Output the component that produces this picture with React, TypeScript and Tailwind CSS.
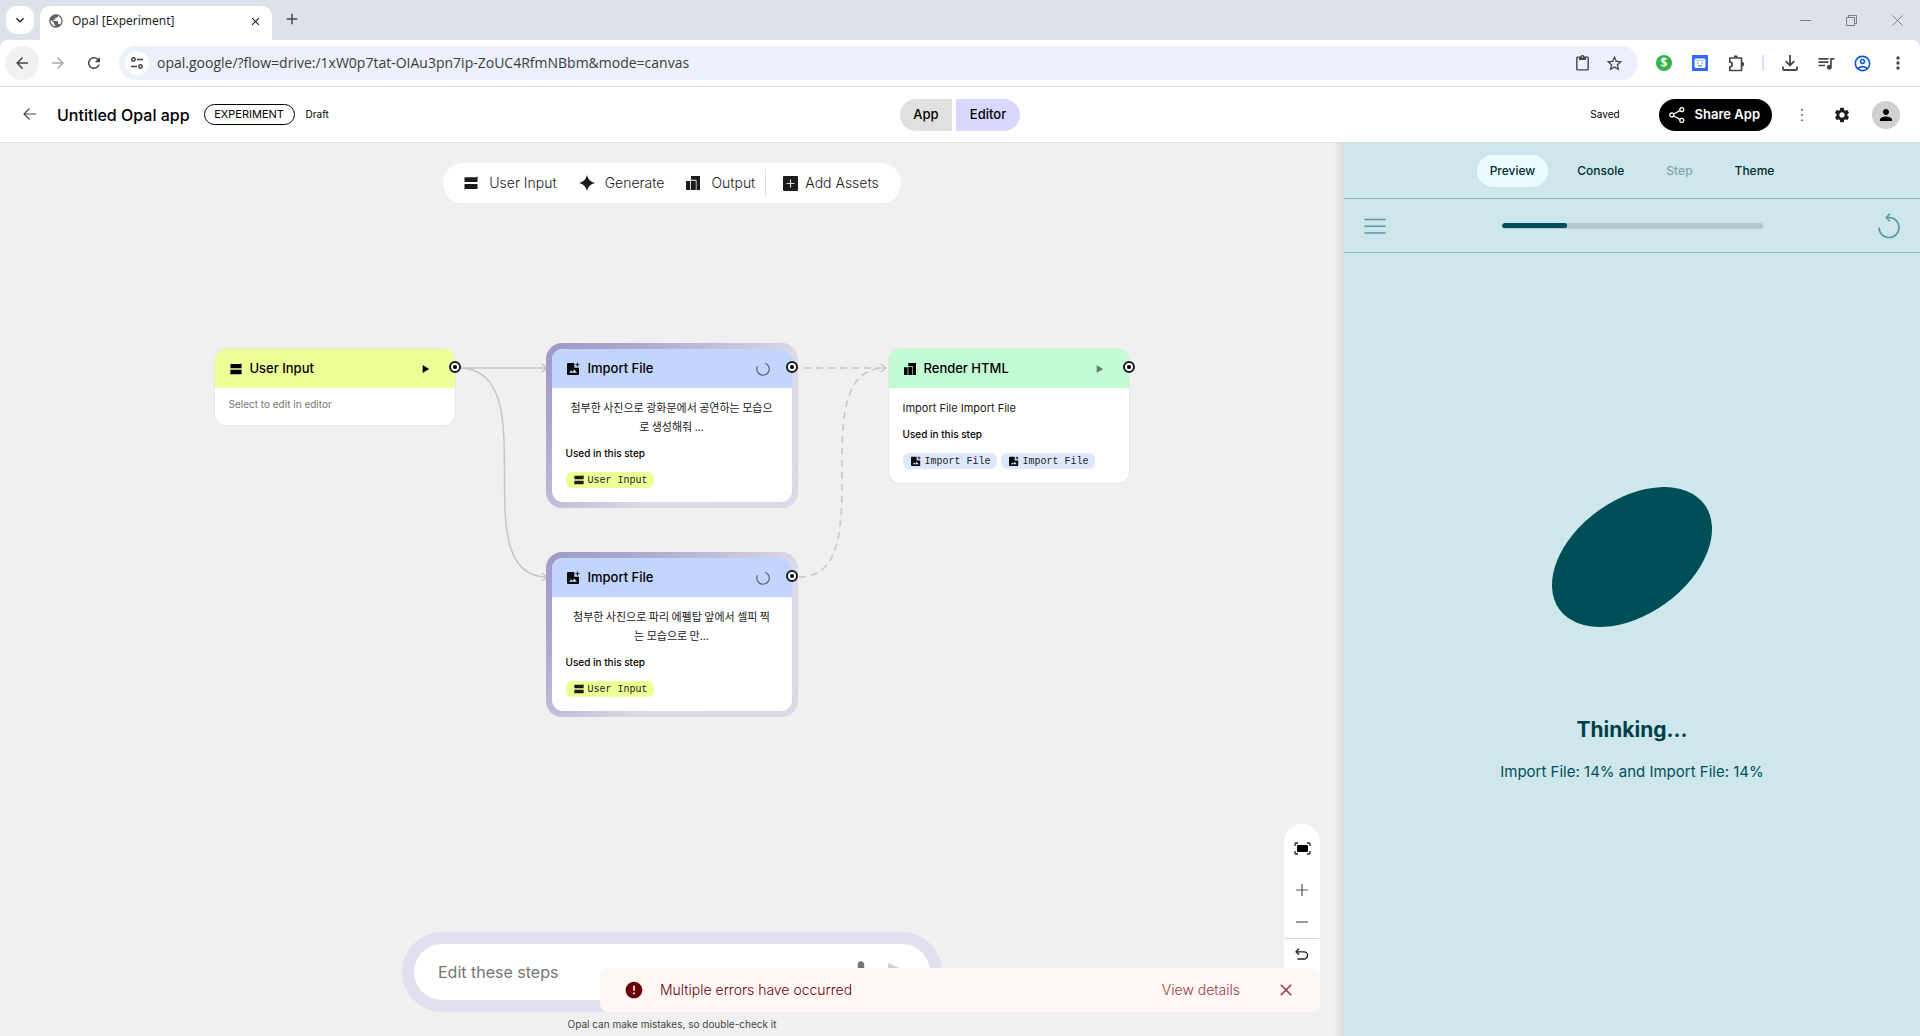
import React from 'react';
import type { ReactNode } from 'react';
import {
  MdArrowBack, MdArrowForward, MdRefresh, MdClose, MdAdd, MdExpandMore, MdPublic, MdStarBorder,
  MdOutlineContentPaste, MdQueueMusic, MdMoreVert, MdSettings, MdPerson, MdPlayArrow, MdError,
  MdMic, MdSend, MdOutlineAccountCircle,
} from 'react-icons/md';

// ─── Icons ────────────────────────────────────────────────────
const InputIcon = ({ size = 14 }: { size?: number }) => (
  <svg width={size} height={size} viewBox="0 0 14 14" fill="currentColor" aria-hidden="true">
    <path d="M.5 1.200h12l1-1.200V6H.5zM.5 8h13v5h-12l-1 1z" />
  </svg>
);

const SparkIcon = () => (
  <svg width="16" height="16" viewBox="0 0 16 16" fill="currentColor" aria-hidden="true">
    <path d="M8 0c.9 4.300 3.700 7.100 8 8-4.300.9-7.100 3.700-8 8-.9-4.300-3.700-7.100-8-8 4.300-.9 7.100-3.700 8-8z" />
  </svg>
);

const OutputIcon = ({ size = 14 }: { size?: number }) => (
  <svg width={size} height={size} viewBox="0 0 14 14" fill="currentColor" aria-hidden="true">
    <path d="M5 0h9v14h-3.500V3.800H5zM0 5h4.200v9H0zM5 4.800h4.800V14H5z" />
  </svg>
);

const AssetIcon = () => (
  <svg width="15" height="15" viewBox="0 0 15 15" aria-hidden="true">
    <rect width="15" height="15" rx="1" fill="#1b1b1b" />
    <path d="M7.500 3.500v8M3.500 7.500h8" stroke="#d8d8d8" strokeWidth="1.200" />
  </svg>
);

const ImageIcon = ({ size = 13 }: { size?: number }) => (
  <svg width={size} height={size} viewBox="0 0 13 13" aria-hidden="true">
    <path d="M1.300 1h6v4.700H12v6c0 .7-.5 1.300-1.200 1.300H1.300C.5 13 0 12.400 0 11.700V2.300C0 1.500.6 1 1.300 1z" fill="#0c0c0c" />
    <path d="M10.400 0l.7 1.900 1.900.7-1.900.7-.7 1.900-.7-1.900-1.900-.7 1.900-.7z" fill="#0c0c0c" />
    <path d="M2.300 10.800l1.900-2.500 1.300 1.700 1.900-2.500 2.500 3.300z" fill="#d6e2fb" />
  </svg>
);

const ShareIcon = () => (
  <svg width="16" height="16" viewBox="0 0 16 16" fill="none" stroke="currentColor" strokeWidth="1.300" aria-hidden="true">
    <circle cx="12.800" cy="2.600" r="2" />
    <circle cx="2.800" cy="8" r="2" />
    <circle cx="12.800" cy="13.400" r="2" />
    <path d="M4.600 7l6.400-3.400M4.600 9l6.400 3.400" />
  </svg>
);

const Spinner = () => (
  <svg width="14" height="14" viewBox="0 0 14 14" fill="none" stroke="#56627c" strokeWidth="1.200" aria-hidden="true">
    <path d="M9.200 1.200A6.200 6.200 0 1 1 1.500 4.200" />
  </svg>
);

const TuneIcon = () => (
  <svg width="14" height="14" viewBox="0 0 14 14" fill="none" stroke="#3c4043" strokeWidth="1.500" aria-hidden="true">
    <circle cx="3.500" cy="3.500" r="1.700" />
    <path d="M7 3.500h6M1 10.500h6" />
    <circle cx="10.500" cy="10.500" r="1.700" />
  </svg>
);

const ExtensionIcon = () => (
  <svg width="17" height="17" viewBox="0 0 17 17" aria-hidden="true">
    <path d="M1.800 3h11.700v12.500H1.800v-3.700a2.400 2.400 0 0 0 0-4.800z" fill="none" stroke="currentColor" strokeWidth="1.700" strokeLinejoin="round" />
    <path d="M5.500 2.500a2.200 2.200 0 0 1 4.400 0zM14 7a2.200 2.200 0 0 1 0 4.400z" fill="currentColor" />
  </svg>
);

const DownloadIcon = () => (
  <svg width="16" height="16" viewBox="0 0 16 16" fill="none" stroke="currentColor" strokeWidth="1.800" aria-hidden="true">
    <path d="M8 0v10M3.800 6.200L8 10.400l4.200-4.200M1 11.500V14q0 1 1 1h12q1 0 1-1v-2.500" />
  </svg>
);

const FitIcon = () => (
  <svg width="17" height="13" viewBox="0 0 17 13" aria-hidden="true">
    <rect x="3" y="3" width="11" height="7" rx="1" fill="#000" />
    <path d="M1 4V2q0-1 1-1h2M13 1h2q1 0 1 1v2M16 9v2q0 1-1 1h-2M4 12H2q-1 0-1-1V9" fill="none" stroke="#222" strokeWidth="1.300" />
  </svg>
);

const UndoIcon = () => (
  <svg width="14" height="12" viewBox="0 0 14 12" fill="none" stroke="#222" strokeWidth="1.300" aria-hidden="true">
    <path d="M4 .8L1 3.800l3 3M1 3.800h8a3.600 3.600 0 0 1 0 7.200H2.500" />
  </svg>
);

const RestartIcon = () => (
  <svg width="22" height="26" viewBox="0 0 22 26" fill="none" stroke="#569aa2" strokeWidth="1.600" aria-hidden="true">
    <path d="M1 14.500A10 10 0 1 0 11 4.500H8.500M12 .8L8.300 4.500l3.700 3.700" />
  </svg>
);

// ─── Browser chrome ───────────────────────────────────────────
const BrowserTabs = () => (
  <div className="flex h-10 items-end bg-[#dde1e9] pl-1.5">
    <button aria-label="Search tabs" className="mb-1.5 flex h-7 w-7 items-center justify-center rounded-[10px] bg-white text-[#1f1f1f]">
      <MdExpandMore size={16} />
    </button>
    <div className="ml-1.5 flex h-[34px] w-[232px] items-center rounded-t-[10px] bg-white pb-1 pl-2 pr-2.5">
      <MdPublic size={16} className="text-[#5f6368]" />
      <span className="ml-2 flex-1 text-xs text-[#1f1f1f]">Opal [Experiment]</span>
      <button aria-label="Close tab" className="text-[#1f1f1f]"><MdClose size={13} /></button>
    </div>
    <button aria-label="New tab" className="mb-3 ml-[11px] text-[#474747]"><MdAdd size={18} /></button>
    <div className="ml-auto flex h-10 items-center gap-[35px] pr-[17px] text-[#7b7e83]">
      <button aria-label="Minimize">
        <svg width="11" height="11" viewBox="0 0 11 11" stroke="currentColor"><path d="M0 5.500h11" /></svg>
      </button>
      <button aria-label="Restore">
        <svg width="11" height="11" viewBox="0 0 11 11" fill="none" stroke="currentColor"><path d="M.5 2.500h8v8h-8zM2.500 2.500v-2h8v8h-2" /></svg>
      </button>
      <button aria-label="Close">
        <svg width="11" height="11" viewBox="0 0 11 11" stroke="currentColor"><path d="M.5.5l10 10M10.500.5l-10 10" /></svg>
      </button>
    </div>
  </div>
);

const ToolbarButton = ({ label, children }: { label: string; children: ReactNode }) => (
  <button aria-label={label} className="flex h-9 w-9 items-center justify-center">{children}</button>
);

const AddressBar = () => (
  <div className="bg-[#dde1e9]">
    <div className="flex h-[47px] items-center rounded-t-lg border-b border-[#dcdcdc] bg-white pl-[5px] pr-1 text-[#474747]">
      <button aria-label="Back" className="flex h-[34px] w-[34px] items-center justify-center rounded-full bg-[#f1f1f1]"><MdArrowBack size={18} /></button>
      <button aria-label="Forward" className="flex w-[38px] justify-center text-[#a9a9a9]"><MdArrowForward size={18} /></button>
      <button aria-label="Reload" className="flex w-[34px] justify-center"><MdRefresh size={18} /></button>
      <div className="ml-2 flex h-[34px] flex-1 items-center rounded-full bg-[#ecf0fa] pl-1.5 pr-2">
        <button aria-label="Site information" className="flex h-6 w-6 items-center justify-center rounded-full bg-white"><TuneIcon /></button>
        <input
          aria-label="Address"
          className="ml-2 min-w-0 flex-1 bg-transparent font-['Open_Sans','Noto_Sans',sans-serif] text-sm text-[#3a3c40] outline-none"
          defaultValue="opal.google/?flow=drive:/1xW0p7tat-OIAu3pn7ip-ZoUC4RfmNBbm&mode=canvas"
        />
        <button aria-label="Clipboard" className="flex w-8 justify-center"><MdOutlineContentPaste size={17} /></button>
        <button aria-label="Bookmark" className="flex w-8 justify-center"><MdStarBorder size={19} /></button>
      </div>
      <div className="ml-2 flex items-center">
        <ToolbarButton label="Savings">
          <span className="flex h-4 w-4 items-center justify-center rounded-full bg-[#35b24a] text-xs font-bold leading-4 text-white">$</span>
        </ToolbarButton>
        <ToolbarButton label="Assistant">
          <svg width="16" height="16" viewBox="0 0 16 16">
            <rect width="16" height="16" fill="#2f6bff" />
            <rect x="2.500" y="3.500" width="11" height="9.500" rx="1.500" fill="#fff" />
            <path d="M4 5.500h8" stroke="#a8c2ff" />
            <path d="M5 8h1.500M9.500 8H11M6 10.500q2 1.300 4 0" stroke="#2f6bff" fill="none" />
          </svg>
        </ToolbarButton>
        <ToolbarButton label="Extensions"><ExtensionIcon /></ToolbarButton>
        <span className="mx-2 h-4 w-0.5 bg-[#d3e3fd]" />
        <ToolbarButton label="Downloads"><DownloadIcon /></ToolbarButton>
        <ToolbarButton label="Media"><MdQueueMusic size={20} /></ToolbarButton>
        <ToolbarButton label="Profile"><MdOutlineAccountCircle size={19} className="text-[#0b57d0]" /></ToolbarButton>
        <ToolbarButton label="Menu"><MdMoreVert size={20} /></ToolbarButton>
      </div>
    </div>
  </div>
);

// ─── App header ───────────────────────────────────────────────
const AppHeader = () => (
  <header className="grid h-14 grid-cols-[1fr_auto_1fr] items-center border-b border-[#dcdcdc] bg-white px-5 text-black">
    <div className="flex items-center">
      <button aria-label="Back to home" className="text-[#474747]">
        <svg width="18" height="14" viewBox="0 0 18 14" fill="none" stroke="currentColor" strokeWidth="1.200"><path d="M16 6H4M9.500.5L4 6l5.500 5.500" /></svg>
      </button>
      <h1 className="ml-[19px] text-base font-medium">Untitled Opal app</h1>
      <span className="ml-3.5 flex h-[21px] w-[91px] items-center justify-center rounded-full border border-black text-[11px]">EXPERIMENT</span>
      <span className="ml-[11px] text-[10px]">Draft</span>
    </div>
    <div className="flex gap-1 text-[13px] font-medium">
      <button className="h-8 w-[52px] rounded-l-full rounded-r-[4px] bg-[#e0e0e0]">App</button>
      <button className="h-8 w-16 rounded-l-[4px] rounded-r-full bg-[#d9d7fd]">Editor</button>
    </div>
    <div className="flex items-center justify-end">
      <span className="text-[10px]">Saved</span>
      <button className="ml-[39px] flex h-8 items-center gap-2.5 rounded-full bg-black pl-2.5 pr-3 text-[13px] font-semibold text-white">
        <ShareIcon />
        Share App
      </button>
      <button aria-label="More" className="ml-[21px] text-[#474747]">
        <svg width="18" height="18" viewBox="0 0 18 18" fill="currentColor"><path d="M8.200 3h1.600v1.600H8.200zM8.200 8.200h1.600v1.600H8.200zM8.200 13.400h1.600V15H8.200z" /></svg>
      </button>
      <button aria-label="Settings" className="ml-[22px] text-[#1b1b1b]"><MdSettings size={18} /></button>
      <button aria-label="Account" className="ml-[21px] flex h-7 w-7 items-center justify-center rounded-full bg-[#d0d0d0]"><MdPerson size={18} /></button>
    </div>
  </header>
);

// ─── Canvas ───────────────────────────────────────────────────
const StepToolbar = () => (
  <div className="flex h-10 items-center rounded-full bg-white pl-[21px] pr-[22px] text-sm font-light text-[#1b1b1b]">
    <button className="flex items-center gap-[11px]"><InputIcon />User Input</button>
    <button className="ml-[22px] flex items-center gap-2.5"><SparkIcon />Generate</button>
    <button className="ml-[22px] flex items-center gap-[11px]"><OutputIcon />Output</button>
    <span className="ml-2.5 h-7 w-px bg-[#dedede]" />
    <button className="ml-[17px] flex items-center gap-[7px]"><AssetIcon />Add Assets</button>
  </div>
);

const Port = () => (
  <span className="absolute -right-1.5 top-3 flex h-3 w-3 items-center justify-center rounded-full border-2 border-[#1b1b1b] bg-white">
    <span className="h-1 w-1 rounded-full bg-black" />
  </span>
);

interface ChipProps {
  icon: ReactNode;
  label: string;
  tone: string;
}

const Chip = ({ icon, label, tone }: ChipProps) => (
  <span className={`flex h-4 items-center gap-1 rounded-[6px] pl-2 pr-1.5 font-['Liberation_Mono',monospace] text-[10px] text-[#1b1b1b] ${tone}`}>
    {icon}
    {label}
  </span>
);

interface NodeCardProps {
  title: string;
  icon: ReactNode;
  action: ReactNode;
  headerBg: string;
  place: string;
  busy?: boolean;
  children: ReactNode;
}

const NodeCard = ({ title, icon, action, headerBg, place, busy, children }: NodeCardProps) => (
  <article
    className={`absolute rounded-2xl ${place} ${
      busy ? 'bg-[linear-gradient(135deg,#9f9ac8_0%,#a9a5cd_20%,#c9c6dd_48%,#dbdae6_62%,#dad9e5_100%)] p-1.5' : ''
    }`}
  >
    <div className={`relative w-60 rounded-[11px] bg-white ${busy ? '' : 'ring-1 ring-[#e6e6e6]'}`}>
      <div className={`flex h-[39px] items-center rounded-t-[11px] px-[15px] text-black ${headerBg}`}>
        {icon}
        <h2 className="ml-2 flex-1 text-[13px] font-medium">{title}</h2>
        {action}
      </div>
      {children}
      <Port />
    </div>
  </article>
);

const importSteps = [
  { place: 'left-[331px] top-0', lines: ['첨부한 사진으로 광화문에서 공연하는 모습으', '로 생성해줘 ...'] },
  { place: 'left-[331px] top-[209px]', lines: ['첨부한 사진으로 파리 에펠탑 앞에서 셀피 찍', '는 모습으로 만...'] },
];

const Board = () => (
  <div className="relative h-[374px] w-[915px]">
    <svg className="absolute left-0 top-0" width="915" height="374" viewBox="0 0 915 374" fill="none" stroke="#c6c6c6" strokeWidth="1.500" aria-hidden="true">
      <path d="M240 25H332M244 25C334 25 246 234 332 234" />
      <path d="M327 21l5 4-5 4M327 230l5 4-5 4" />
      <path d="M577 25H670M584 234C670 234 584 25 670 25" strokeDasharray="7 5" />
      <path d="M666 21l5 4-5 4" />
    </svg>

    <NodeCard
      title="User Input"
      icon={<InputIcon size={12} />}
      action={<button aria-label="Run step" className="mr-2"><MdPlayArrow size={14} /></button>}
      headerBg="bg-[#eeff98]"
      place="left-0 top-1.5"
    >
      <p className="px-3.5 pb-[13px] pt-2 text-[10px] leading-4 text-[#757575]">Select to edit in editor</p>
    </NodeCard>

    {importSteps.map((step) => (
      <NodeCard
        key={step.place}
        busy
        title="Import File"
        icon={<ImageIcon />}
        action={<span className="mr-[7px]"><Spinner /></span>}
        headerBg="bg-[#c2d5fd]"
        place={step.place}
      >
        <div className="px-3.5 pb-3.5 pt-2.5 text-[10px] text-[#1b1b1b]">
          <p className="text-center font-['Noto_Sans_CJK_KR',sans-serif] text-[11px] leading-[19px]">
            {step.lines.map((line) => <span key={line} className="block whitespace-nowrap">{line}</span>)}
          </p>
          <p className="mt-[9px] font-medium leading-4 text-black">Used in this step</p>
          <div className="mt-[11px] flex"><Chip icon={<InputIcon size={10} />} label="User Input" tone="bg-[#eeff98]" /></div>
        </div>
      </NodeCard>
    ))}

    <NodeCard
      title="Render HTML"
      icon={<OutputIcon size={12} />}
      action={<button aria-label="Run step" className="mr-2 text-[#64806a]"><MdPlayArrow size={14} /></button>}
      headerBg="bg-[#c3fcd4]"
      place="left-[674px] top-1.5"
    >
      <div className="px-3.5 pb-3.5 pt-3 text-[10px] text-[#1b1b1b]">
        <p className="text-[11px] leading-4">Import File Import File</p>
        <p className="mt-2.5 font-medium leading-4 text-black">Used in this step</p>
        <div className="mt-[11px] flex gap-1">
          <Chip icon={<ImageIcon size={10} />} label="Import File" tone="bg-[#dde8fe]" />
          <Chip icon={<ImageIcon size={10} />} label="Import File" tone="bg-[#dde8fe]" />
        </div>
      </div>
    </NodeCard>
  </div>
);

const ZoomControls = () => (
  <div className="absolute bottom-[42px] right-6 flex h-[170px] w-9 flex-col items-center rounded-t-full bg-white px-px pt-[18px] text-[#555]">
    <button aria-label="Fit to view"><FitIcon /></button>
    <button aria-label="Zoom in" className="mt-[29px]">
      <svg width="12" height="12" viewBox="0 0 12 12" stroke="currentColor" strokeWidth="1.200"><path d="M6 0v12M0 6h12" /></svg>
    </button>
    <button aria-label="Zoom out" className="mt-5">
      <svg width="12" height="12" viewBox="0 0 12 12" stroke="currentColor" strokeWidth="1.200"><path d="M0 6h12" /></svg>
    </button>
    <span className="mt-2.5 h-px w-full bg-[#d6d6d6]" />
    <button aria-label="Undo" className="mt-[9px]"><UndoIcon /></button>
  </div>
);

const Snackbar = () => (
  <div role="alert" className="absolute bottom-6 right-6 flex h-11 w-[720px] items-center rounded-lg bg-[#fff7f6] pl-6 pr-6 text-sm font-light text-[#67000a]">
    <MdError size={20} className="text-[#67000a]" />
    <span className="ml-4 flex-1">Multiple errors have occurred</span>
    <button className="text-[#8f3f45]">View details</button>
    <button aria-label="Dismiss" className="ml-9 text-[#9a484d]"><MdClose size={20} /></button>
  </div>
);

const Canvas = () => (
  <main className="relative flex flex-[7] flex-col items-center bg-[#f0f0f0] pt-5">
    <StepToolbar />
    <div className="mt-[140px]"><Board /></div>

    <div className="mt-auto flex flex-col items-center">
      <div className="rounded-full bg-[#e1e0f0] p-3">
        <div className="flex h-14 w-[516px] items-center rounded-full bg-white pl-6 pr-5">
          <input aria-label="Edit these steps" placeholder="Edit these steps" className="min-w-0 flex-1 bg-transparent text-base outline-none placeholder:text-[#757575]" />
          <button aria-label="Dictate" className="text-[#757575]"><MdMic size={26} /></button>
          <button aria-label="Send" className="ml-3 text-[#d3d3d3]"><MdSend size={24} /></button>
        </div>
      </div>
      <p className="py-1 text-[10px] leading-4 text-[#444]">Opal can make mistakes, so double-check it</p>
    </div>

    <ZoomControls />
    <Snackbar />
    <div className="absolute inset-y-0 right-0 w-2.5 bg-linear-to-r from-[#f0f0f0] to-[#d9d9d9]" />
  </main>
);

// ─── Preview pane ─────────────────────────────────────────────
const PreviewPane = () => (
  <aside className="flex flex-[3] flex-col bg-[#cee7ec] text-[#004f58]">
    <nav className="flex h-14 items-center justify-center gap-4 border-b border-[#8fb3b9] text-xs font-medium text-[#002a30]">
      <button className="h-8 rounded-full bg-[#ebfcff] px-[13px]">Preview</button>
      <button className="h-8 px-[13px]">Console</button>
      <button disabled className="h-8 px-[13px] text-[#83a4aa]">Step</button>
      <button className="h-8 px-[13px]">Theme</button>
    </nav>
    <div className="flex h-[54px] items-center justify-between border-b border-[#8fb3b9] px-5">
      <button aria-label="Menu">
        <svg width="22" height="16" viewBox="0 0 22 16" stroke="#569aa2" strokeWidth="1.600" strokeLinecap="round"><path d="M1 1.500h20M1 8.200h20M1 15h20" /></svg>
      </button>
      <div role="progressbar" aria-label="Progress" aria-valuenow={25} className="h-1.5 w-[261px] overflow-hidden rounded-full bg-[#b0cace]">
        <div className="h-[5px] w-1/4 rounded-full bg-[#004f58]" />
      </div>
      <button aria-label="Restart"><RestartIcon /></button>
    </div>
    <div className="flex flex-1 flex-col items-center pt-[204px]">
      <svg width="200" height="200" viewBox="-100 -100 200 200" aria-hidden="true">
        <ellipse rx="89.500" ry="57.300" transform="rotate(-35.700)" fill="#004f58" />
      </svg>
      <h2 className="mt-[57px] text-[21px] font-bold leading-8 text-[#003f47]">Thinking...</h2>
      <p className="mt-3.5 text-[15px] leading-6">Import File: 14% and Import File: 14%</p>
    </div>
  </aside>
);

export default function App() {
  return (
    <div className="flex min-h-screen flex-col font-['Inter','Noto_Sans_CJK_KR',sans-serif]">
      <div className="font-['Noto_Sans','Noto_Sans_CJK_KR',sans-serif]">
        <BrowserTabs />
        <AddressBar />
      </div>
      <AppHeader />
      <div className="flex flex-1">
        <Canvas />
        <PreviewPane />
      </div>
    </div>
  );
}
